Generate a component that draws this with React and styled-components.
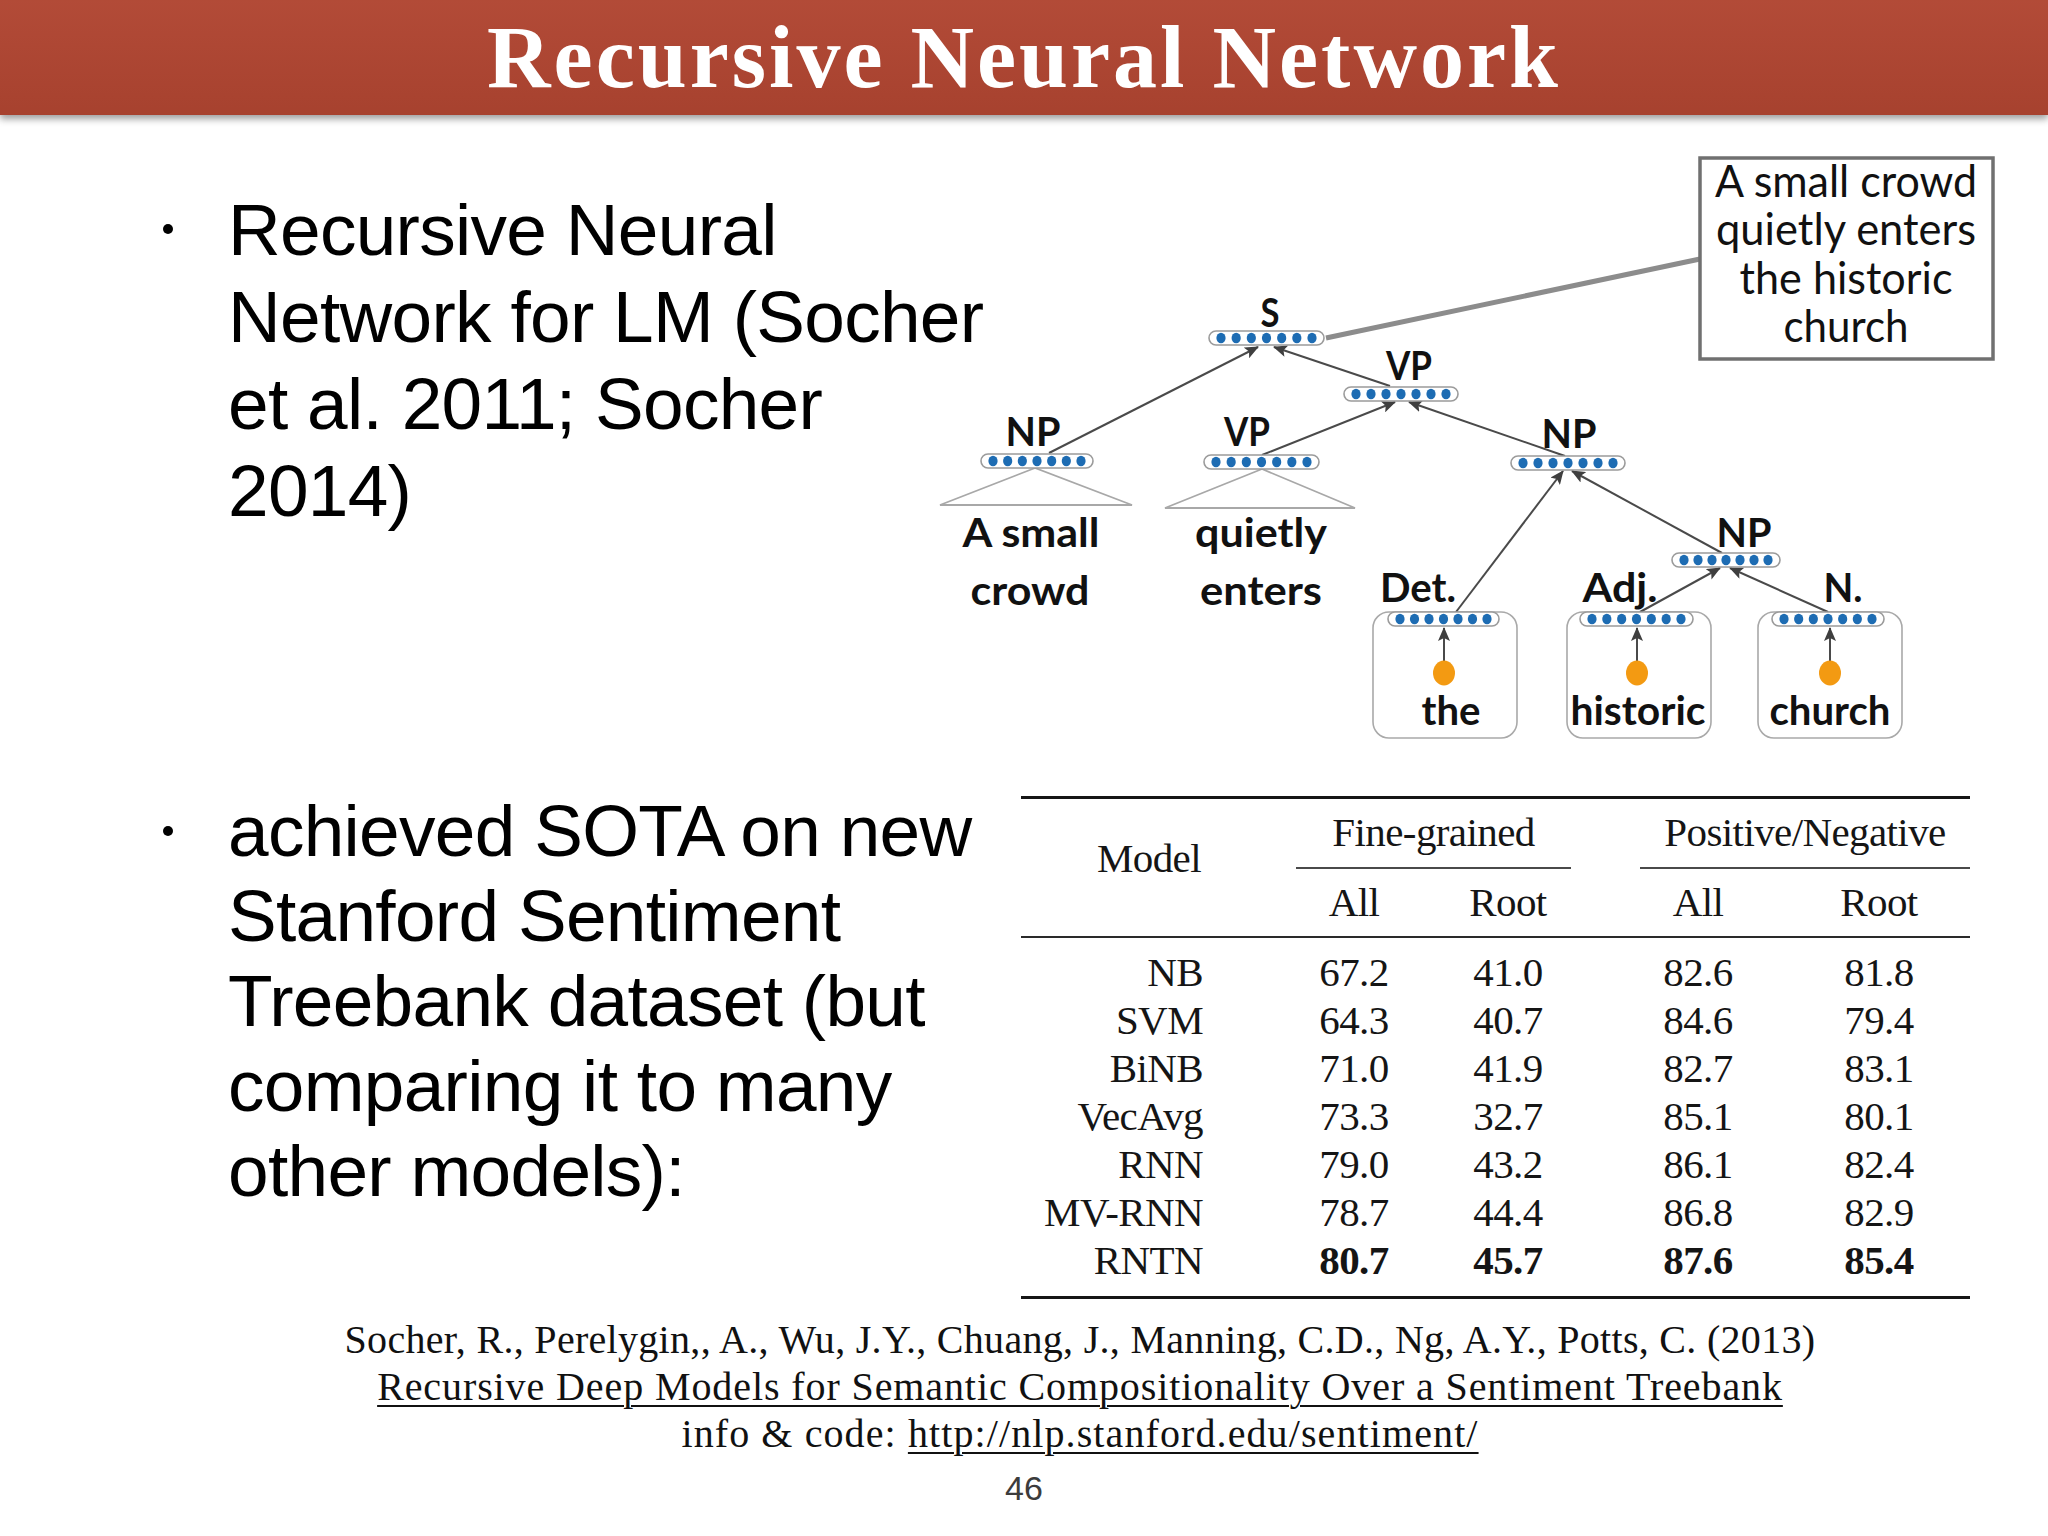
import React from 'react';
import styled, { createGlobalStyle } from 'styled-components';

const GlobalStyle = createGlobalStyle`
  html, body { margin: 0; padding: 0; background: #ffffff; }
  body { width: 2048px; height: 1536px; overflow: hidden; }
`;

const Slide = styled.div`
  width: 2048px;
  height: 1536px;
  display: flex;
  flex-direction: column;
  background: #ffffff;
`;

const Header = styled.header`
  flex: none;
  height: 115px;
  background-color: #b04531;
  background-image: linear-gradient(180deg, rgba(255,255,255,0.03), rgba(0,0,0,0.05));
  box-shadow: 0 4px 7px rgba(0, 0, 0, 0.38);
  display: flex;
  justify-content: center;
  align-items: flex-start;
  position: relative;
  z-index: 1;
`;

const Title = styled.h1`
  margin: 0;
  padding-top: 14px;
  font-family: "Liberation Serif", "Times New Roman", serif;
  font-weight: 700;
  font-size: 88px;
  line-height: 88px;
  letter-spacing: 3px;
  color: #ffffff;
  white-space: nowrap;
`;

const Body = styled.main`
  display: grid;
  grid-template-columns: 920px 1128px;
  grid-template-rows: 630px 554px;
`;

const BulletItem = styled.div`
  display: flex;
  align-items: flex-start;
  padding-top: ${(p) => p.$top}px;
`;

const Dot = styled.span`
  flex: none;
  width: 10px;
  height: 10px;
  border-radius: 50%;
  background: #000;
  margin: 38px 55px 0 163px;
`;

const BulletText = styled.div`
  font-family: "Liberation Sans", Arial, sans-serif;
  font-size: 73px;
  line-height: ${(p) => p.$lh}px;
  letter-spacing: -0.7px;
  color: #000;
  white-space: nowrap;
`;

const Diagram = styled.svg`
  display: block;
  width: 1128px;
  height: 630px;
`;

const Label = styled.text`
  font-family: Lato, "Open Sans", sans-serif;
  font-weight: 700;
  font-size: 41px;
  fill: #111;
`;

const BoxText = styled.text`
  font-family: Lato, "Open Sans", sans-serif;
  font-weight: 400;
  font-size: 44px;
  fill: #111;
`;

const TableWrap = styled.div`
  margin: 51px 0 0 101px;
  width: 949px;
  display: grid;
  grid-template-columns: 256px 154px 154px 226px 136px 23px;
  border-top: 3px solid #161616;
  border-bottom: 3px solid #161616;
  padding-bottom: 12px;
  font-family: "Liberation Serif", "Times New Roman", serif;
  font-size: 41px;
  letter-spacing: -0.6px;
  color: #151515;
`;

const ModelHead = styled.div`
  grid-column: 1;
  grid-row: 1 / span 2;
  display: flex;
  align-items: center;
  justify-content: center;
  padding-bottom: 19px;
`;

const GroupHead = styled.div`
  grid-column: ${(p) => p.$col};
  grid-row: 1;
  height: 70px;
  box-sizing: border-box;
  margin: ${(p) => p.$margin};
  border-bottom: 2px solid #4a4a4a;
  text-align: center;
  line-height: 66px;
  white-space: nowrap;
`;

const SubHead = styled.div`
  grid-column: ${(p) => p.$col};
  grid-row: 2;
  height: 67px;
  line-height: 67px;
  text-align: center;
`;

const MidRule = styled.div`
  grid-column: 1 / -1;
  height: 2px;
  background: #2a2a2a;
  margin-bottom: 10px;
`;

const Cell = styled.div`
  grid-column: ${(p) => p.$col};
  height: 48px;
  line-height: 48px;
  text-align: ${(p) => (p.$name ? 'right' : 'center')};
  padding-right: ${(p) => (p.$name ? '74px' : '0')};
  font-weight: ${(p) => (p.$bold ? 700 : 400)};
  white-space: nowrap;
`;

const Footer = styled.footer`
  padding-top: 17px;
  display: flex;
  flex-direction: column;
  align-items: center;
`;

const Citation = styled.div`
  margin-left: 112px;
  text-align: center;
  font-family: "Liberation Serif", "Times New Roman", serif;
  font-size: 40px;
  line-height: 47px;
  color: #111;
`;

const CiteLine = styled.div`
  white-space: nowrap;
  letter-spacing: ${(p) => p.$ls}px;
`;

const Link = styled.span`
  text-decoration: underline;
  text-decoration-thickness: 2px;
  text-underline-offset: 5px;
`;

const PageNum = styled.div`
  margin-top: 11px;
  font-family: "Liberation Sans", Arial, sans-serif;
  font-size: 34px;
  line-height: 40px;
  color: #3c3c3c;
`;

const BARS = [
  { x1: 1209, x2: 1324, cy: 338 },
  { x1: 1344, x2: 1458, cy: 394 },
  { x1: 981, x2: 1093, cy: 461 },
  { x1: 1204, x2: 1319, cy: 462 },
  { x1: 1511, x2: 1625, cy: 463 },
  { x1: 1672, x2: 1780, cy: 560 },
  { x1: 1388, x2: 1499, cy: 619 },
  { x1: 1580, x2: 1693, cy: 619 },
  { x1: 1772, x2: 1884, cy: 619 },
];

const LABELS = [
  { t: 'S', x: 1270, y: 327, w: 19 },
  { t: 'VP', x: 1409, y: 380, w: 46 },
  { t: 'NP', x: 1033, y: 446, w: 55 },
  { t: 'VP', x: 1247, y: 446, w: 46 },
  { t: 'NP', x: 1569, y: 448, w: 55 },
  { t: 'NP', x: 1744, y: 547, w: 55 },
  { t: 'Det.', x: 1418, y: 602, w: 76 },
  { t: 'Adj.', x: 1620, y: 602, w: 75 },
  { t: 'N.', x: 1843, y: 602, w: 39 },
  { t: 'A small', x: 1031, y: 547, w: 137 },
  { t: 'crowd', x: 1030, y: 605, w: 119 },
  { t: 'quietly', x: 1261, y: 547, w: 132 },
  { t: 'enters', x: 1261, y: 605, w: 122 },
  { t: 'the', x: 1451, y: 725, w: 59 },
  { t: 'historic', x: 1638, y: 725, w: 135 },
  { t: 'church', x: 1830, y: 725, w: 121 },
];

const BOX_LINES = [
  { t: 'A small crowd', y: 197, w: 262 },
  { t: 'quietly enters', y: 245, w: 260 },
  { t: 'the historic', y: 294, w: 213 },
  { t: 'church', y: 342, w: 125 },
];

const ARROWS = [
  [1049, 453, 1258, 347],
  [1390, 386, 1274, 347],
  [1262, 455, 1395, 402],
  [1565, 456, 1409, 402],
  [1456, 612, 1563, 471],
  [1722, 553, 1572, 471],
  [1640, 612, 1720, 568],
  [1828, 612, 1730, 568],
  [1444, 661, 1444, 628],
  [1637, 661, 1637, 628],
  [1830, 661, 1830, 628],
];

const WORD_BOXES = [
  { x1: 1373, x2: 1517 },
  { x1: 1567, x2: 1711 },
  { x1: 1758, x2: 1902 },
];

const DOTS = [1444, 1637, 1830];

function Bar({ x1, x2, cy }) {
  const step = (x2 - x1 - 24) / 6;
  return (
    <g>
      <rect x={x1} y={cy - 7} width={x2 - x1} height={14} rx={7} fill="#fff" stroke="#9b9b9b" strokeWidth="1.6" />
      {Array.from({ length: 7 }).map((_, i) => (
        <ellipse key={i} cx={x1 + 12 + i * step} cy={cy} rx={4.6} ry={5.2} fill="#1d6cb3" />
      ))}
    </g>
  );
}

function TreeDiagram() {
  return (
    <Diagram viewBox="920 115 1128 630">
      <defs>
        <marker id="ah" markerWidth="14" markerHeight="12" refX="13" refY="6" orient="auto" markerUnits="userSpaceOnUse">
          <path d="M0,0 L14,6 L0,12 L3,6 z" fill="#3f3f3f" />
        </marker>
      </defs>

      <line x1="1326" y1="338" x2="1700" y2="259" stroke="#8c8c8c" strokeWidth="5" />
      <rect x="1700" y="158" width="293" height="201" fill="#fff" stroke="#707070" strokeWidth="3.5" />
      {BOX_LINES.map((l) => (
        <BoxText key={l.t} x={1846} y={l.y} textAnchor="middle" textLength={l.w} lengthAdjust="spacingAndGlyphs">
          {l.t}
        </BoxText>
      ))}

      <polygon points="1035,468 940,505 1132,505" fill="none" stroke="#a8a8a8" strokeWidth="1.8" />
      <polygon points="1262,469 1165,508 1355,508" fill="none" stroke="#a8a8a8" strokeWidth="1.8" />

      {WORD_BOXES.map((b) => (
        <rect key={b.x1} x={b.x1} y={612} width={b.x2 - b.x1} height={126} rx={16} fill="#fff" stroke="#a9a9a9" strokeWidth="1.6" />
      ))}

      {ARROWS.map(([x1, y1, x2, y2], i) => (
        <line key={i} x1={x1} y1={y1} x2={x2} y2={y2} stroke="#4a4a4a" strokeWidth="2" markerEnd="url(#ah)" />
      ))}

      {BARS.map((b, i) => (
        <Bar key={i} {...b} />
      ))}

      {DOTS.map((x) => (
        <ellipse key={x} cx={x} cy={673} rx={11} ry={12.5} fill="#f39a12" />
      ))}

      {LABELS.map((l, i) => (
        <Label key={i} x={l.x} y={l.y} textAnchor="middle" textLength={l.w} lengthAdjust="spacingAndGlyphs">
          {l.t}
        </Label>
      ))}
    </Diagram>
  );
}

const ROWS = [
  ['NB', '67.2', '41.0', '82.6', '81.8'],
  ['SVM', '64.3', '40.7', '84.6', '79.4'],
  ['BiNB', '71.0', '41.9', '82.7', '83.1'],
  ['VecAvg', '73.3', '32.7', '85.1', '80.1'],
  ['RNN', '79.0', '43.2', '86.1', '82.4'],
  ['MV-RNN', '78.7', '44.4', '86.8', '82.9'],
  ['RNTN', '80.7', '45.7', '87.6', '85.4'],
];

function ResultsTable() {
  return (
    <TableWrap>
      <ModelHead>Model</ModelHead>
      <GroupHead $col="2 / span 2" $margin="0 14px 0 19px">Fine-grained</GroupHead>
      <GroupHead $col="4 / span 3" $margin="0 0 0 55px">Positive/Negative</GroupHead>
      <SubHead $col={2}>All</SubHead>
      <SubHead $col={3}>Root</SubHead>
      <SubHead $col={4}>All</SubHead>
      <SubHead $col={5}>Root</SubHead>
      <MidRule />
      {ROWS.map((r) => {
        const bold = r[0] === 'RNTN';
        return (
          <React.Fragment key={r[0]}>
            <Cell $col={1} $name>{r[0]}</Cell>
            <Cell $col={2} $bold={bold}>{r[1]}</Cell>
            <Cell $col={3} $bold={bold}>{r[2]}</Cell>
            <Cell $col={4} $bold={bold}>{r[3]}</Cell>
            <Cell $col={5} $bold={bold}>{r[4]}</Cell>
          </React.Fragment>
        );
      })}
    </TableWrap>
  );
}

export default function App() {
  return (
    <>
      <GlobalStyle />
      <Slide>
        <Header>
          <Title>Recursive Neural Network</Title>
        </Header>
        <Body>
          <BulletItem $top={71}>
            <Dot />
            <BulletText $lh={87}>
              Recursive Neural
              <br />
              Network for LM (Socher
              <br />
              et al. 2011; Socher
              <br />
              2014)
            </BulletText>
          </BulletItem>
          <TreeDiagram />
          <BulletItem $top={43}>
            <Dot />
            <BulletText $lh={85}>
              achieved SOTA on new
              <br />
              Stanford Sentiment
              <br />
              Treebank dataset (but
              <br />
              comparing it to many
              <br />
              other models):
            </BulletText>
          </BulletItem>
          <ResultsTable />
        </Body>
        <Footer>
          <Citation>
            <CiteLine $ls={0.3}>Socher, R., Perelygin,, A., Wu, J.Y., Chuang, J., Manning, C.D., Ng, A.Y., Potts, C. (2013)</CiteLine>
            <CiteLine $ls={0.9}>
              <Link>Recursive Deep Models for Semantic Compositionality Over a Sentiment Treebank</Link>
            </CiteLine>
            <CiteLine $ls={1.1}>
              info &amp; code: <Link>http://nlp.stanford.edu/sentiment/</Link>
            </CiteLine>
          </Citation>
          <PageNum>46</PageNum>
        </Footer>
      </Slide>
    </>
  );
}
